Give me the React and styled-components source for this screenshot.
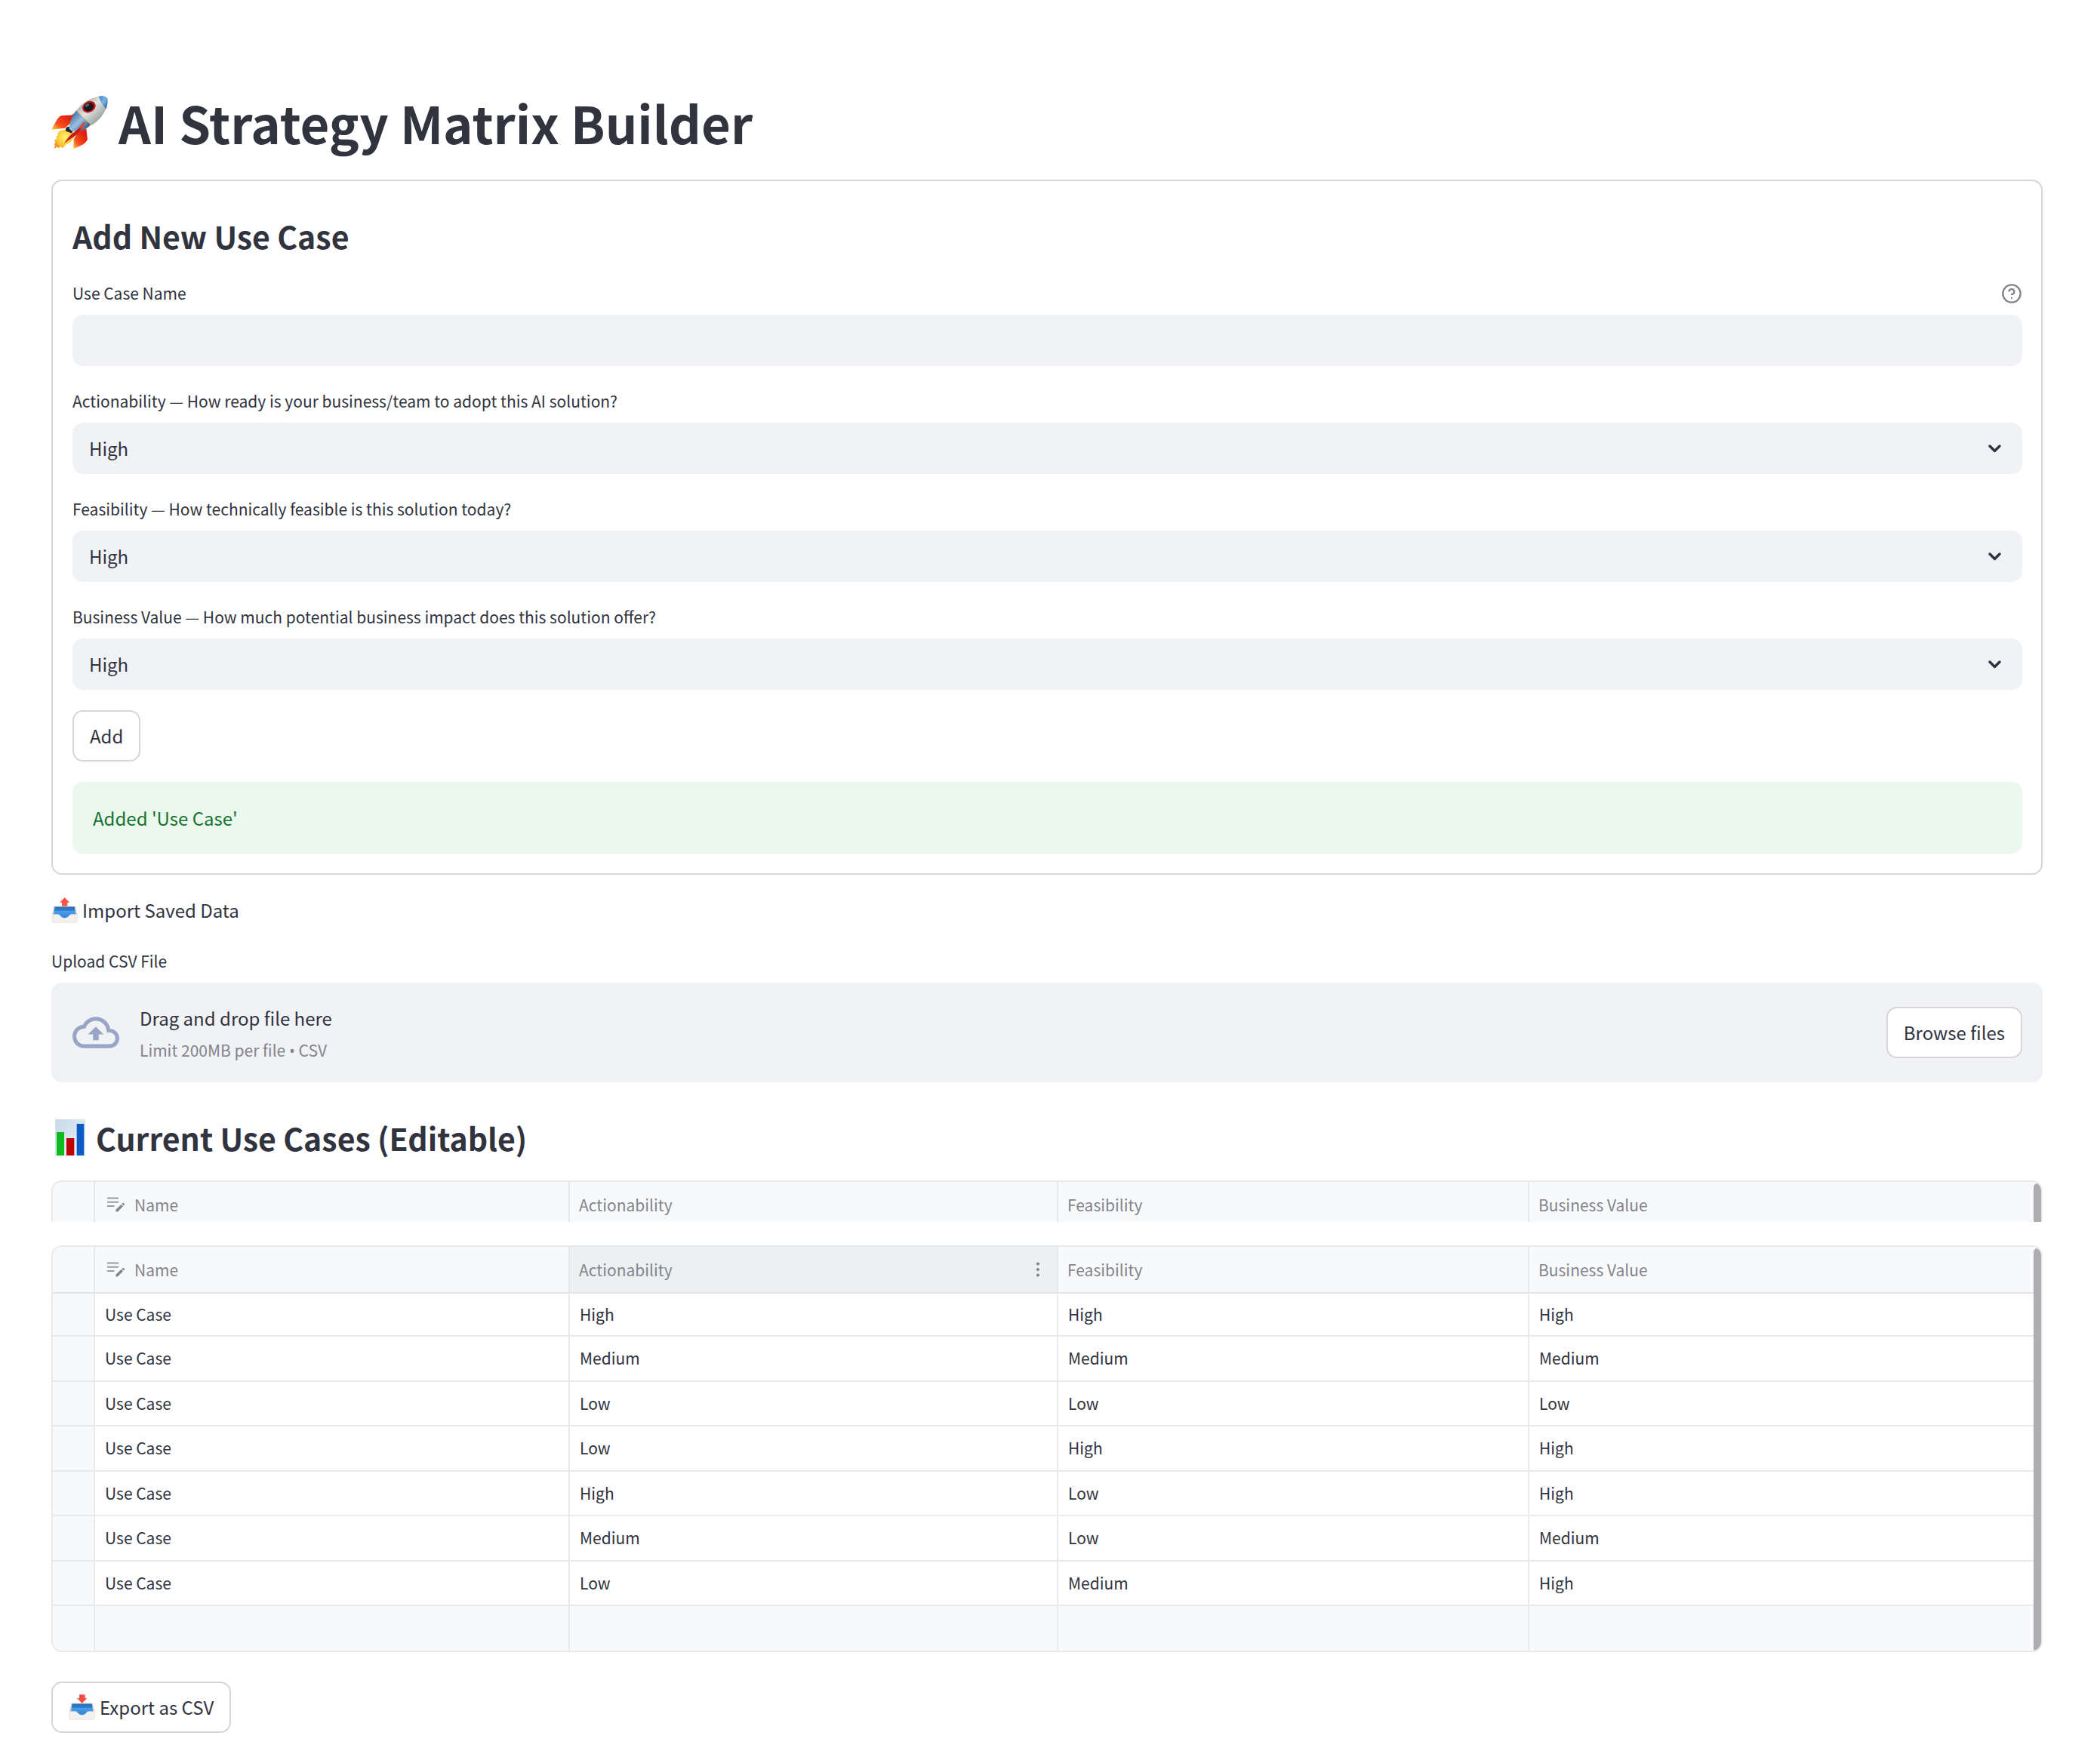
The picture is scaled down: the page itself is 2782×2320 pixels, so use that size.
import React, { useRef } from "react";
import styled, { createGlobalStyle, css } from "styled-components";

const GlobalStyle = createGlobalStyle`
  *, *::before, *::after { box-sizing: border-box; }
  body {
    margin: 0;
    background: #ffffff;
    color: #31333f;
    font-family: "Noto Sans CJK SC", "Noto Sans", sans-serif;
    font-size: 24px;
    line-height: 42px;
  }
  h1, h2, p { margin: 0; }
  svg { display: block; flex: none; }
`;

const Page = styled.main`
  display: flex;
  flex-direction: column;
  padding: 122px 76px 25px 68px;
`;

const Title = styled.h1`
  display: flex;
  align-items: center;
  gap: 14px;
  margin-bottom: 36px;
  font-size: 67px;
  font-weight: 700;
  line-height: 80px;
`;

const Heading = styled.h2`
  display: flex;
  align-items: center;
  gap: 14px;
  padding: ${(p) => (p.$inCard ? "22px 0 8px" : "49px 0 33px")};
  font-size: 41px;
  font-weight: 700;
  line-height: 48px;
`;

const Card = styled.section`
  display: flex;
  flex-direction: column;
  align-items: stretch;
  gap: 27px;
  padding: 26px 25px 26px 26px;
  margin-bottom: 26px;
  border: 2px solid #d6d6d8;
  border-radius: 14px;
`;

const Fields = styled.div`
  display: flex;
  flex-direction: column;
  gap: 29px;
`;

const Field = styled.div`
  display: flex;
  flex-direction: column;
  gap: 12px;
`;

const LabelRow = styled.div`
  display: flex;
  align-items: center;
  justify-content: space-between;
  height: 34px;
`;

const Label = styled.label`
  font-size: 21px;
  line-height: 34px;
`;

const HelpButton = styled.button`
  padding: 2px 0 0;
  border: 0;
  background: none;
  color: #83848c;
`;

const control = css`
  width: 100%;
  height: 68px;
  padding: 0 22px;
  border: 0;
  border-radius: 14px;
  background: #f0f2f6;
  color: inherit;
  font: inherit;
`;

const TextInput = styled.input`
  ${control}
`;

const SelectWrap = styled.div`
  display: grid;
  align-items: center;

  > * {
    grid-area: 1 / 1;
  }

  > svg {
    justify-self: end;
    margin-right: 28px;
    pointer-events: none;
  }
`;

const Select = styled.select`
  ${control}
  appearance: none;
`;

const Button = styled.button`
  display: inline-flex;
  align-items: center;
  align-self: ${(p) => (p.$centered ? "center" : "flex-start")};
  gap: 6px;
  height: 68px;
  padding: 0 21px;
  border: 2px solid #d6d6d8;
  border-radius: 14px;
  background: #ffffff;
  color: inherit;
  font: inherit;
  white-space: nowrap;
`;

const Alert = styled.div`
  padding: 27px 27px 26px;
  border-radius: 14px;
  background: #eaf8ee;
  color: #177233;
`;

const ImportTitle = styled.p`
  display: flex;
  align-items: center;
  gap: 6px;
  margin-bottom: 29px;
`;

const Dropzone = styled.div`
  display: flex;
  align-items: center;
  gap: 27px;
  height: 132px;
  padding: 0 27px 0 28px;
  border-radius: 14px;
  background: #f0f2f6;
`;

const DropText = styled.div`
  flex: 1;
  padding-top: 4px;
`;

const Hint = styled.p`
  color: #83848c;
  font-size: 21px;
`;

const Bullet = styled.span`
  font-family: "Open Sans", sans-serif;
`;

const GridFrame = styled.div`
  display: flex;
  overflow: hidden;
  border: 2px solid #e9e9eb;
  border-radius: 14px;

  ${(p) =>
    p.$clipped &&
    css`
      height: 55px;
      margin-bottom: 31px;
      border-bottom: 0;
      border-radius: 14px 14px 0 0;
    `}
`;

const Scrollbar = styled.div`
  flex: none;
  width: 10px;
  margin-top: 2px;
  border-radius: 6px 6px 0 0;
  background: #adadb1;
`;

const Table = styled.table`
  flex: 1;
  width: 100%;
  border-collapse: separate;
  border-spacing: 0;
  table-layout: fixed;
  font-size: 21px;
  line-height: 34px;
`;

const Col = styled.col`
  width: ${(p) => (p.$w ? `${p.$w}px` : "auto")};
`;

const HeadCell = styled.th`
  height: 62px;
  padding: 0 12px;
  border-right: 2px solid #e6e7ea;
  border-bottom: 2px solid #e3e4e8;
  background: ${(p) => (p.$active ? "#ecf0f3" : "#f8f9fb")};
  color: #83848c;
  font-weight: 400;
  text-align: left;

  &:last-child {
    border-right: 0;
  }
`;

const HeadContent = styled.div`
  display: flex;
  align-items: center;
  gap: 12px;
  padding-left: ${(p) => (p.$icon ? "4px" : "0")};

  > button {
    margin-left: auto;
  }
`;

const MenuButton = styled.button`
  padding: 0 10px;
  border: 0;
  background: none;
  color: #83848c;
`;

const Cell = styled.td`
  padding: 0 13px 2px;
  border-right: 2px solid #e9eaec;
  border-bottom: 2px solid #e9eaec;
  background: ${(p) => (p.$muted ? "#f8f9fb" : "#ffffff")};

  &:last-child {
    border-right: 0;
  }
`;

const Row = styled.tr`
  > td {
    height: 59px;
  }

  &:nth-child(even) > td {
    height: 60px;
  }

  &:first-child > td {
    height: 57px;
  }

  &:last-child > td {
    height: 59px;
    border-bottom: 0;
  }
`;

const ExportRow = styled.div`
  display: flex;
  margin-top: 39px;
`;

function Rocket() {
  return (
    <svg width="75" height="71" viewBox="54 54 225 214" aria-hidden="true">
      <defs>
        <linearGradient id="hull" x1="0" y1="0" x2="1" y2="1">
          <stop offset="0.1" stopColor="#8d979b" />
          <stop offset="0.45" stopColor="#e3e5e2" />
          <stop offset="0.85" stopColor="#8b9795" />
        </linearGradient>
        <linearGradient id="band" x1="0" y1="0" x2="1" y2="1">
          <stop offset="0.2" stopColor="#4c7dad" />
          <stop offset="0.5" stopColor="#9cc0e0" />
          <stop offset="0.9" stopColor="#23486f" />
        </linearGradient>
        <linearGradient id="finA" x1="1" y1="0" x2="0" y2="1">
          <stop offset="0.3" stopColor="#e1220f" />
          <stop offset="0.7" stopColor="#f8501c" />
          <stop offset="1" stopColor="#ffd23a" />
        </linearGradient>
        <radialGradient id="flame" cx="0.55" cy="0.4" r="0.7">
          <stop offset="0" stopColor="#fff27a" />
          <stop offset="0.6" stopColor="#fbc62c" />
          <stop offset="1" stopColor="#ee7411" />
        </radialGradient>
        <linearGradient id="nose" x1="0" y1="0" x2="1" y2="1">
          <stop offset="0" stopColor="#3d86c8" />
          <stop offset="0.5" stopColor="#79b2e4" />
          <stop offset="1" stopColor="#1b4f8c" />
        </linearGradient>
      </defs>
      <path d="M150 120 L134 131 L93 133 Q82 138 74 153 L54 189 L108 183 L128 165Z" fill="url(#finA)" />
      <path d="M193 184 L198 228 Q190 245 170 253 L142 266 L143 228 L160 196Z" fill="url(#finA)" />
      <path d="M108 189 L85 195 L78 206 L80 213 L72 217 L76 224 L66 232 L70 240 L65 247 L69 252 L64 266 L76 257 L81 262 L91 256 L98 262 L107 254 L113 248 L128 242 L145 220 L139 198Z" fill="url(#flame)" />
      <path d="M112 181 L122 176 L142 190 L135 203 L110 194Z" fill="#1e252c" />
      <path d="M153 112 Q172 132 212 168 Q196 188 163 195 Q145 198 135 195 L124 184 Q129 140 153 112Z" fill="url(#band)" />
      <path d="M153 112 Q190 66 246 55 Q255 76 275 98 Q260 142 216 171 Q188 147 153 112Z" fill="url(#hull)" />
      <path d="M243 56 Q263 50 277 62 Q282 79 272 107 Q252 86 243 56Z" fill="url(#nose)" />
      <path d="M153 112 Q180 142 216 172" fill="none" stroke="#d9b95b" strokeWidth="3" />
      <ellipse cx="204" cy="98" rx="28" ry="22" transform="rotate(-28 204 98)" fill="#d5171d" />
      <ellipse cx="203" cy="98" rx="21" ry="17" transform="rotate(-28 203 98)" fill="#16181b" />
      <ellipse cx="197" cy="91" rx="9" ry="6" transform="rotate(-28 197 91)" fill="#56595c" />
      <path d="M187 162 Q172 194 149 213 Q127 227 105 245 Q119 220 138 204 Q162 189 181 160Z" fill="#cb1713" />
      <path d="M187 160 Q184 173 174 186 L164 182 Q176 172 183 159Z" fill="#f0402a" />
    </svg>
  );
}

function Tray({ down }) {
  const id = down ? "tray-in" : "tray-out";
  return (
    <svg width="35" height="34" viewBox="24 25 107 102" aria-hidden="true">
      <defs>
        <linearGradient id={id} x1="0" y1="0" x2="0" y2="1">
          <stop offset="0" stopColor="#2876c4" />
          <stop offset="0.4" stopColor="#4a9cec" />
          <stop offset="1" stopColor="#2d7fd2" />
        </linearGradient>
      </defs>
      <path d="M35 60 H121 L129 94 H27Z" fill="#c9cfd4" />
      <path d="M38 62 H118 L123 96 Q100 112 78 110 Q54 112 33 96Z" fill={`url(#${id})`} />
      <path d="M38 62 H118 L120 78 H36Z" fill="#2467aa" opacity="0.45" />
      <path
        d="M27 93 H50 Q57 93 61 100 Q67 108 78 108 Q89 108 95 100 Q99 93 106 93 H129 V121 Q129 126 124 126 H32 Q27 126 27 121Z"
        fill="#f2f1ef"
        stroke="#dddbd6"
        strokeWidth="2"
      />
      {down ? (
        <path d="M67 25 H90 V39 H98 L78 60 L58 39 H67Z" fill="#fa4a40" />
      ) : (
        <path d="M78 25 L98 45 H89 V59 H67 V45 H58Z" fill="#fc5147" />
      )}
    </svg>
  );
}

function BarChart() {
  return (
    <svg width="45" height="48" viewBox="24 36 135 144" aria-hidden="true">
      <defs>
        <linearGradient id="paper" x1="0" y1="0" x2="1" y2="1">
          <stop offset="0" stopColor="#cbdcea" />
          <stop offset="1" stopColor="#eff5fa" />
        </linearGradient>
      </defs>
      <rect x="39" y="36" width="120" height="144" fill="url(#paper)" />
      <path
        d="M39 48H159M39 60H159M39 72H159M39 84H159M39 96H159M51 36V180M63 36V180M75 36V180M87 36V180M99 36V180M111 36V180"
        stroke="#bdd0e0"
        strokeWidth="1"
      />
      <rect x="45" y="87" width="30" height="93" fill="#0bbd1b" />
      <rect x="84" y="111" width="31" height="69" fill="#bd0408" />
      <rect x="125" y="54" width="29" height="126" fill="#0a5cc4" />
    </svg>
  );
}

function HelpIcon() {
  return (
    <svg
      width="28"
      height="28"
      viewBox="0 0 24 24"
      fill="none"
      stroke="currentColor"
      strokeWidth="2"
      strokeLinecap="round"
      strokeLinejoin="round"
      aria-hidden="true"
    >
      <circle cx="12" cy="12" r="10" />
      <path d="M9.09 9a3 3 0 0 1 5.83 1c0 2-3 3-3 3" />
      <path d="M12 17h.01" />
    </svg>
  );
}

function Chevron() {
  return (
    <svg width="17" height="11" viewBox="0 0 17 11" aria-hidden="true">
      <path
        d="M2 2 L8.5 8.5 L15 2"
        fill="none"
        stroke="#31333f"
        strokeWidth="3.4"
        strokeLinecap="round"
        strokeLinejoin="round"
      />
    </svg>
  );
}

function CloudUpload() {
  return (
    <svg width="62" height="62" viewBox="0 0 24 24" fill="#98a5c4" aria-hidden="true">
      <path d="M19.35 10.04C18.67 6.59 15.64 4 12 4 9.11 4 6.6 5.64 5.35 8.04 2.34 8.36 0 10.91 0 14c0 3.31 2.69 6 6 6h13c2.76 0 5-2.24 5-5 0-2.64-2.05-4.78-4.65-4.96zM19 18H6c-2.21 0-4-1.79-4-4 0-2.05 1.53-3.76 3.56-3.97l1.07-.11.5-.95C8.08 7.14 9.94 6 12 6c2.62 0 4.88 1.86 5.39 4.43l.3 1.5 1.53.11c1.56.1 2.78 1.41 2.78 2.96 0 1.65-1.35 3-3 3zM8 13h2.55v3h2.9v-3H16l-4-4z" />
    </svg>
  );
}

function EditNote() {
  return (
    <svg width="24" height="20" viewBox="0 0 24 20" aria-hidden="true">
      <path d="M0 1.5H15M0 6.7H15M0 12H9.5" stroke="#989aa2" strokeWidth="1.9" />
      <path d="M11.5 19.5V16.8L18.6 9.8L21 12.2L13.9 19.5Z" fill="#83848c" />
      <path d="M19.4 9L20.5 7.9Q21.2 7.4 21.9 7.9L22.9 8.9Q23.4 9.7 22.9 10.3L21.8 11.4Z" fill="#83848c" />
    </svg>
  );
}

function Kebab() {
  return (
    <svg width="6" height="20" viewBox="0 0 6 20" fill="currentColor" aria-hidden="true">
      <circle cx="3" cy="2.5" r="2.1" />
      <circle cx="3" cy="10" r="2.1" />
      <circle cx="3" cy="17.5" r="2.1" />
    </svg>
  );
}

const SELECTS = [
  ["actionability", "Actionability — How ready is your business/team to adopt this AI solution?"],
  ["feasibility", "Feasibility — How technically feasible is this solution today?"],
  ["business-value", "Business Value — How much potential business impact does this solution offer?"],
];

const ROWS = [
  ["Use Case", "High", "High", "High"],
  ["Use Case", "Medium", "Medium", "Medium"],
  ["Use Case", "Low", "Low", "Low"],
  ["Use Case", "Low", "High", "High"],
  ["Use Case", "High", "Low", "High"],
  ["Use Case", "Medium", "Low", "Medium"],
  ["Use Case", "Low", "Medium", "High"],
];

const EMPTY = ["", "", "", ""];

function UseCaseGrid({ clipped, active, rows = [] }) {
  return (
    <GridFrame $clipped={clipped}>
      <Table>
        <colgroup>
          <Col $w={56} />
          <Col $w={629} />
          <Col $w={647} />
          <Col $w={624} />
          <Col />
        </colgroup>
        <thead>
          <tr>
            <HeadCell />
            <HeadCell scope="col">
              <HeadContent $icon>
                <EditNote />
                Name
              </HeadContent>
            </HeadCell>
            {["Actionability", "Feasibility", "Business Value"].map((name) => (
              <HeadCell key={name} scope="col" $active={active === name}>
                <HeadContent>
                  {name}
                  {active === name && (
                    <MenuButton type="button" aria-label="Column menu">
                      <Kebab />
                    </MenuButton>
                  )}
                </HeadContent>
              </HeadCell>
            ))}
          </tr>
        </thead>
        {rows.length > 0 && (
          <tbody>
            {[...rows, EMPTY].map((row, r) => (
              <Row key={r}>
                <Cell $muted />
                {row.map((value, c) => (
                  <Cell key={c} $muted={row === EMPTY}>
                    {value}
                  </Cell>
                ))}
              </Row>
            ))}
          </tbody>
        )}
      </Table>
      <Scrollbar />
    </GridFrame>
  );
}

export default function App() {
  const fileInput = useRef(null);

  return (
    <>
      <GlobalStyle />
      <Page>
        <Title>
          <Rocket />
          AI Strategy Matrix Builder
        </Title>

        <Card>
          <Heading $inCard>Add New Use Case</Heading>
          <Fields>
            <Field>
              <LabelRow>
                <Label htmlFor="use-case-name">Use Case Name</Label>
                <HelpButton type="button" aria-label="Help">
                  <HelpIcon />
                </HelpButton>
              </LabelRow>
              <TextInput id="use-case-name" type="text" />
            </Field>
            {SELECTS.map(([id, text]) => (
              <Field key={id}>
                <Label htmlFor={id}>{text}</Label>
                <SelectWrap>
                  <Select id={id} defaultValue="High">
                    <option>High</option>
                    <option>Medium</option>
                    <option>Low</option>
                  </Select>
                  <Chevron />
                </SelectWrap>
              </Field>
            ))}
          </Fields>
          <Button type="button">Add</Button>
          <Alert role="status">Added 'Use Case'</Alert>
        </Card>

        <ImportTitle>
          <Tray />
          Import Saved Data
        </ImportTitle>
        <Field>
          <Label htmlFor="csv-file">Upload CSV File</Label>
          <Dropzone>
            <CloudUpload />
            <DropText>
              <p>Drag and drop file here</p>
              <Hint>
                Limit 200MB per file <Bullet>•</Bullet> CSV
              </Hint>
            </DropText>
            <input id="csv-file" type="file" accept=".csv" hidden ref={fileInput} />
            <Button type="button" $centered onClick={() => fileInput.current.click()}>
              Browse files
            </Button>
          </Dropzone>
        </Field>

        <Heading>
          <BarChart />
          Current Use Cases (Editable)
        </Heading>
        <UseCaseGrid clipped />
        <UseCaseGrid active="Actionability" rows={ROWS} />

        <ExportRow>
          <Button type="button">
            <Tray down />
            Export as CSV
          </Button>
        </ExportRow>
      </Page>
    </>
  );
}
